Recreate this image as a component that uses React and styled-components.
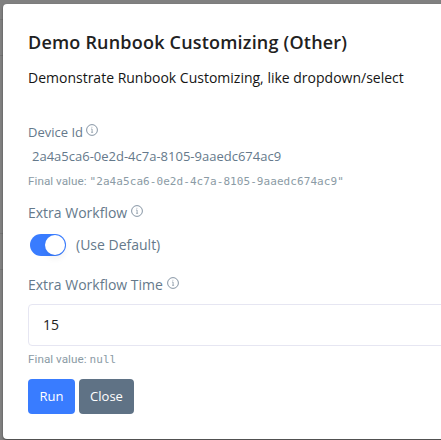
import React from 'react';
import styled, { createGlobalStyle } from 'styled-components';

const GlobalStyle = createGlobalStyle`
  * { box-sizing: border-box; }
  body { margin: 0; overflow: hidden; background: #808080; font-family: "Open Sans", sans-serif; }
`;

const Backdrop = styled.div`
  width: 441px;
  height: 440px;
  padding: 4px 0 0 3px;
  overflow: hidden;
  background:
    linear-gradient(#747474, #747474) 0 19px / 3px 1px no-repeat,
    linear-gradient(#747474, #747474) 0 55px / 3px 1px no-repeat,
    linear-gradient(#747474, #747474) 0 233px / 3px 1px no-repeat,
    linear-gradient(#747474, #747474) 0 269px / 3px 1px no-repeat,
    #808080;
`;

const Dialog = styled.section`
  width: 500px;
  height: 435px;
  padding: 24px 25px;
  border-radius: 4px;
  background: #fff;
  box-shadow: 0 1px 2px rgba(0, 0, 0, 0.5);
`;

const Title = styled.h1`
  margin: 0;
  font-size: 18px;
  line-height: 28px;
  letter-spacing: 0.2px;
  font-weight: 600;
  color: #212121;
  white-space: nowrap;
`;

const Description = styled.p`
  margin: 11px 0 31px;
  font-size: 14px;
  line-height: 22px;
  color: #151515;
  white-space: nowrap;
`;

const Label = styled.div`
  display: flex;
  height: 24px;
  margin-top: ${({ $top = 0 }) => $top}px;
  gap: ${({ $small }) => ($small ? 3 : 4)}px;
  font-size: ${({ $small }) => ($small ? 13 : 14)}px;
  line-height: 24px;
  color: #65798b;
  white-space: nowrap;
`;

const InfoSvg = styled.svg`
  margin-top: 4px;
  flex: none;
`;

const DeviceValue = styled.div`
  padding-left: 4px;
  font-size: 13px;
  line-height: 24px;
  color: #65798b;
`;

const Hint = styled.div`
  height: 18px;
  margin-top: 4px;
  font-family: Roboto, sans-serif;
  font-size: 11.7px;
  line-height: 18px;
  letter-spacing: 0.04px;
  color: #8b9ba5;
  white-space: nowrap;
`;

const Code = styled.code`
  font-family: "DejaVu Sans Mono", monospace;
  font-size: 11px;
  letter-spacing: 0.07px;
`;

const ToggleRow = styled.div`
  display: flex;
  align-items: center;
  height: 40px;
  padding-left: 2px;
  gap: 10px;
  font-size: 14px;
  line-height: 20px;
  color: #65798b;
`;

const Toggle = styled.div`
  display: flex;
  justify-content: flex-end;
  width: 36px;
  height: 22px;
  padding: 1px;
  border-radius: 11px;
  background: #397cff;
`;

const Knob = styled.div`
  width: 20px;
  height: 20px;
  border-radius: 50%;
  background: #fff;
  box-shadow: 0 4px 6px rgba(0, 0, 0, 0.06);
`;

const Field = styled.div`
  height: 42px;
  margin-top: 7px;
  padding-left: 14px;
  border: 1px solid #e6e6f2;
  border-radius: 4px;
  font-size: 14px;
  line-height: 40px;
  color: #222;
`;

const Actions = styled.div`
  display: flex;
  gap: 4px;
  margin-top: 11px;
`;

const Button = styled.button`
  width: ${({ $width }) => $width}px;
  height: 35px;
  padding: 0;
  border: 0;
  border-radius: 4px;
  background: ${({ $color }) => $color};
  color: #fff;
  font: 500 13px/35px "Open Sans", sans-serif;
`;

function InfoIcon() {
  return (
    <InfoSvg width="12" height="12" viewBox="0 0 12 12" fill="none" stroke="#78899a">
      <circle cx="6" cy="6" r="5.4" strokeWidth="0.9" />
      <path d="M5.1 5h1v3.2M5.1 8.3h2M5.5 3.3h.8" strokeWidth="0.7" />
    </InfoSvg>
  );
}

export default function App() {
  return (
    <>
      <GlobalStyle />
      <Backdrop>
        <Dialog>
          <Title>Demo Runbook Customizing (Other)</Title>
          <Description>Demonstrate Runbook Customizing, like dropdown/select</Description>
          <Label $small>Device Id<InfoIcon /></Label>
          <DeviceValue>2a4a5ca6-0e2d-4c7a-8105-9aaedc674ac9</DeviceValue>
          <Hint>Final value: <Code>"2a4a5ca6-0e2d-4c7a-8105-9aaedc674ac9"</Code></Hint>
          <Label $top={11}>Extra Workflow<InfoIcon /></Label>
          <ToggleRow><Toggle><Knob /></Toggle>(Use Default)</ToggleRow>
          <Label $top={8}>Extra Workflow Time<InfoIcon /></Label>
          <Field>15</Field>
          <Hint>Final value: <Code>null</Code></Hint>
          <Actions>
            <Button $width={47} $color="#397cff">Run</Button>
            <Button $width={55} $color="#5f7285">Close</Button>
          </Actions>
        </Dialog>
      </Backdrop>
    </>
  );
}
